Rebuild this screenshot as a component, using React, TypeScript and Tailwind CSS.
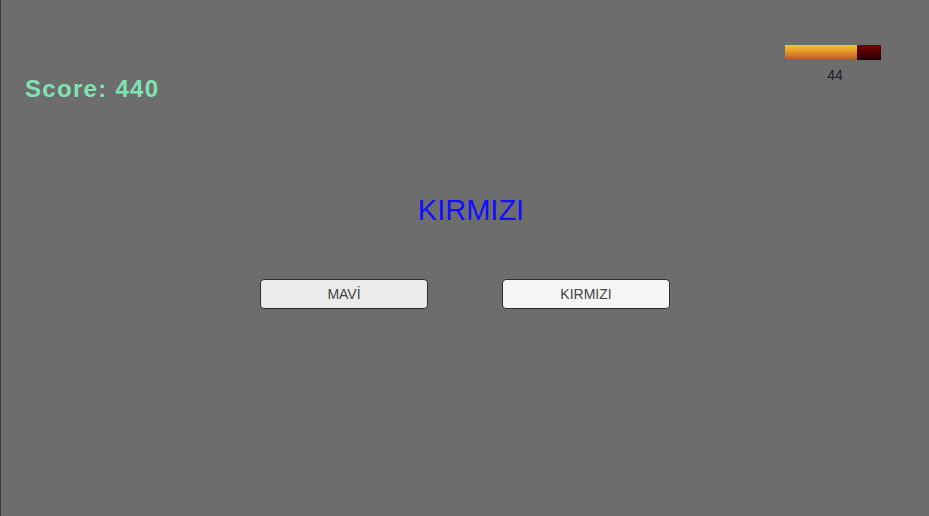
import React from "react";

const font = { fontFamily: '"Liberation Sans", Arial, sans-serif' };

function HealthBar({ value, pct }: { value: number; pct: number }) {
  return (
    <div className="flex w-[96px] flex-col items-center">
      <div className="flex h-[15px] w-full bg-gradient-to-b from-[#7a0000] to-[#240000]">
        <div
          className="h-full bg-gradient-to-b from-[#f7c531] via-[#e0902c] to-[#b8522a]"
          style={{ width: `${pct}%` }}
        />
      </div>
      <span className="mt-[8px] pl-[4px] text-[14px] leading-none text-[#1c1c28]">{value}</span>
    </div>
  );
}

export default function App() {
  return (
    <div
      className="flex h-[516px] w-full flex-col border-l border-[#3c3c3c] bg-[#6d6d6d]"
      style={font}
    >
      <div className="flex items-start justify-between pl-[24px] pr-[48px] pt-[45px]">
        <p className="mt-[32px] text-[24px] font-bold leading-none tracking-[1.3px] text-[#7fe3b3]">
          Score: 440
        </p>
        <HealthBar value={44} pct={75} />
      </div>

      <div className="mt-[95px] flex justify-center pl-[12px]">
        <h1 className="text-[29px] leading-none text-[#1010ff]">KIRMIZI</h1>
      </div>

      <div className="mt-[54px] flex justify-center gap-[74px]">
        <button className="h-[30px] w-[168px] rounded-[4px] border border-[#2e2e2e] bg-[#ebebeb] text-[14px] text-[#444]">
          MAVİ
        </button>
        <button className="h-[30px] w-[168px] rounded-[4px] border border-[#2e2e2e] bg-[#f5f5f5] text-[14px] text-[#444]">
          KIRMIZI
        </button>
      </div>
    </div>
  );
}
